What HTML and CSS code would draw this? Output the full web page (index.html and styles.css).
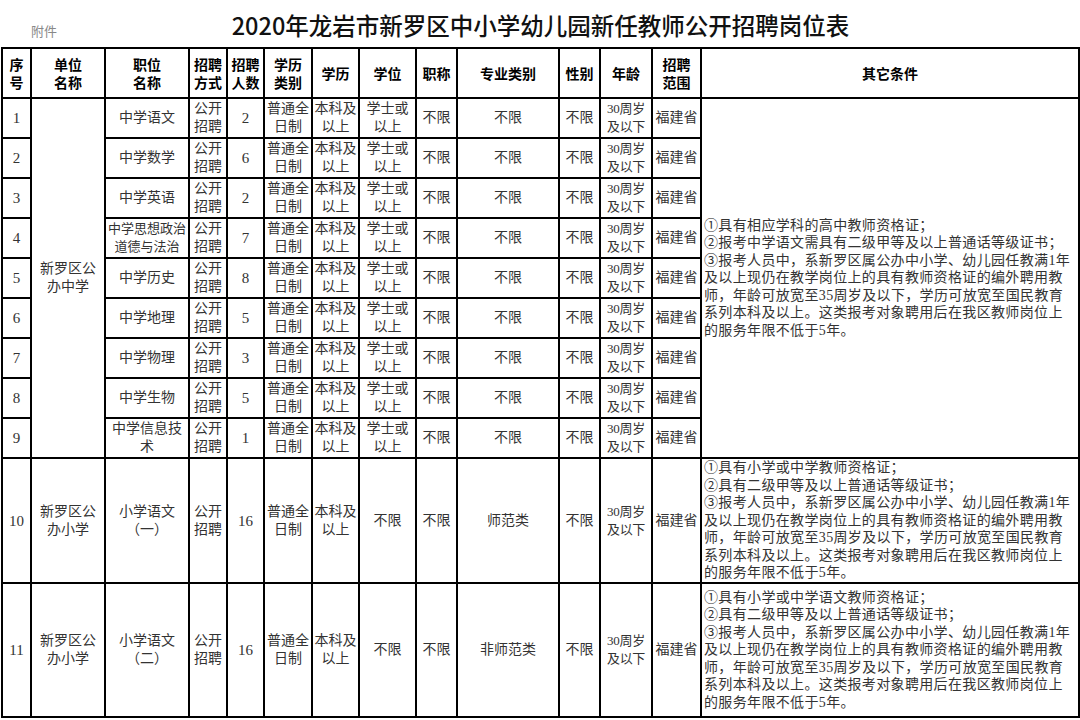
FILE: index.html
```html
<!DOCTYPE html>
<html lang="zh-CN">
<head>
<meta charset="utf-8">
<title>2020年龙岩市新罗区中小学幼儿园新任教师公开招聘岗位表</title>
<link rel="stylesheet" href="styles.css">
</head>
<body>
<div class="page">
  <header class="doc-head">
    <span class="attach">附件</span>
    <h1 class="doc-title">2020年龙岩市新罗区中小学幼儿园新任教师公开招聘岗位表</h1>
    <span></span>
  </header>
  <table class="jobs">
    <colgroup>
      <col class="c-no"><col class="c-unit"><col class="c-pos"><col class="c-way"><col class="c-num">
      <col class="c-type"><col class="c-edu"><col class="c-deg"><col class="c-title"><col class="c-major">
      <col class="c-sex"><col class="c-age"><col class="c-area"><col class="c-other">
    </colgroup>
    <thead>
      <tr>
        <th>序<br>号</th><th>单位<br>名称</th><th>职位<br>名称</th><th>招聘<br>方式</th><th>招聘<br>人数</th>
        <th>学历<br>类别</th><th>学历</th><th>学位</th><th>职称</th><th>专业类别</th>
        <th>性别</th><th>年龄</th><th>招聘<br>范围</th><th>其它条件</th>
      </tr>
    </thead>
    <tbody>
      <tr>
        <td class="num">1</td>
        <td rowspan="9">新罗区公<br>办中学</td>
        <td>中学语文</td><td>公开<br>招聘</td><td class="num">2</td><td>普通全<br>日制</td><td>本科及<br>以上</td><td>学士或<br>以上</td><td>不限</td><td>不限</td><td>不限</td><td class="age">30周岁<br>及以下</td><td>福建省</td>
        <td rowspan="9" class="other">①具有相应学科的高中教师资格证；<br>②报考中学语文需具有二级甲等及以上普通话等级证书；<br>③报考人员中，系新罗区属公办中小学、幼儿园任教满1年<br>及以上现仍在教学岗位上的具有教师资格证的编外聘用教<br>师，年龄可放宽至35周岁及以下，学历可放宽至国民教育<br>系列本科及以上。这类报考对象聘用后在我区教师岗位上<br>的服务年限不低于5年。</td>
      </tr>
      <tr><td class="num">2</td><td>中学数学</td><td>公开<br>招聘</td><td class="num">6</td><td>普通全<br>日制</td><td>本科及<br>以上</td><td>学士或<br>以上</td><td>不限</td><td>不限</td><td>不限</td><td class="age">30周岁<br>及以下</td><td>福建省</td></tr>
      <tr><td class="num">3</td><td>中学英语</td><td>公开<br>招聘</td><td class="num">2</td><td>普通全<br>日制</td><td>本科及<br>以上</td><td>学士或<br>以上</td><td>不限</td><td>不限</td><td>不限</td><td class="age">30周岁<br>及以下</td><td>福建省</td></tr>
      <tr><td class="num">4</td><td class="small">中学思想政治<br>道德与法治</td><td>公开<br>招聘</td><td class="num">7</td><td>普通全<br>日制</td><td>本科及<br>以上</td><td>学士或<br>以上</td><td>不限</td><td>不限</td><td>不限</td><td class="age">30周岁<br>及以下</td><td>福建省</td></tr>
      <tr><td class="num">5</td><td>中学历史</td><td>公开<br>招聘</td><td class="num">8</td><td>普通全<br>日制</td><td>本科及<br>以上</td><td>学士或<br>以上</td><td>不限</td><td>不限</td><td>不限</td><td class="age">30周岁<br>及以下</td><td>福建省</td></tr>
      <tr><td class="num">6</td><td>中学地理</td><td>公开<br>招聘</td><td class="num">5</td><td>普通全<br>日制</td><td>本科及<br>以上</td><td>学士或<br>以上</td><td>不限</td><td>不限</td><td>不限</td><td class="age">30周岁<br>及以下</td><td>福建省</td></tr>
      <tr><td class="num">7</td><td>中学物理</td><td>公开<br>招聘</td><td class="num">3</td><td>普通全<br>日制</td><td>本科及<br>以上</td><td>学士或<br>以上</td><td>不限</td><td>不限</td><td>不限</td><td class="age">30周岁<br>及以下</td><td>福建省</td></tr>
      <tr><td class="num">8</td><td>中学生物</td><td>公开<br>招聘</td><td class="num">5</td><td>普通全<br>日制</td><td>本科及<br>以上</td><td>学士或<br>以上</td><td>不限</td><td>不限</td><td>不限</td><td class="age">30周岁<br>及以下</td><td>福建省</td></tr>
      <tr><td class="num">9</td><td>中学信息技<br>术</td><td>公开<br>招聘</td><td class="num">1</td><td>普通全<br>日制</td><td>本科及<br>以上</td><td>学士或<br>以上</td><td>不限</td><td>不限</td><td>不限</td><td class="age">30周岁<br>及以下</td><td>福建省</td></tr>
      <tr class="tall10">
        <td class="num">10</td><td>新罗区公<br>办小学</td><td>小学语文<br>（一）</td><td>公开<br>招聘</td><td class="num">16</td><td>普通全<br>日制</td><td>本科及<br>以上</td><td>不限</td><td>不限</td><td>师范类</td><td>不限</td><td class="age">30周岁<br>及以下</td><td>福建省</td>
        <td class="other">①具有小学或中学教师资格证；<br>②具有二级甲等及以上普通话等级证书；<br>③报考人员中，系新罗区属公办中小学、幼儿园任教满1年<br>及以上现仍在教学岗位上的具有教师资格证的编外聘用教<br>师，年龄可放宽至35周岁及以下，学历可放宽至国民教育<br>系列本科及以上。这类报考对象聘用后在我区教师岗位上<br>的服务年限不低于5年。</td>
      </tr>
      <tr class="tall11">
        <td class="num">11</td><td>新罗区公<br>办小学</td><td>小学语文<br>（二）</td><td>公开<br>招聘</td><td class="num">16</td><td>普通全<br>日制</td><td>本科及<br>以上</td><td>不限</td><td>不限</td><td>非师范类</td><td>不限</td><td class="age">30周岁<br>及以下</td><td>福建省</td>
        <td class="other">①具有小学或中学语文教师资格证；<br>②具有二级甲等及以上普通话等级证书；<br>③报考人员中，系新罗区属公办中小学、幼儿园任教满1年<br>及以上现仍在教学岗位上的具有教师资格证的编外聘用教<br>师，年龄可放宽至35周岁及以下，学历可放宽至国民教育<br>系列本科及以上。这类报考对象聘用后在我区教师岗位上<br>的服务年限不低于5年。</td>
      </tr>
    </tbody>
  </table>
</div>
</body>
</html>
```

FILE: styles.css
```css
html, body {
  margin: 0;
  padding: 0;
  background: #fff;
}

.page {
  width: 1080px;
  padding: 0 0 0 1px;
  box-sizing: border-box;
}

.doc-head {
  height: 47px;
  display: grid;
  grid-template-columns: 1fr auto 1fr;
  align-items: center;
}

.attach {
  padding: 14px 0 0 30px;
  font: 13px "Noto Sans CJK SC", sans-serif;
  color: #888;
}

.doc-title {
  margin: 0;
  font: 500 23.5px/28px "Noto Sans CJK SC", sans-serif;
  color: #111;
  padding-top: 2px;
}

.jobs {
  width: 1077px;
  table-layout: fixed;
  border-collapse: collapse;
  font: 14px/18px "Liberation Serif", "Noto Sans CJK SC", serif;
  color: #333;
}

.c-no { width: 29px; }
.c-unit { width: 74px; }
.c-pos { width: 84px; }
.c-way { width: 38px; }
.c-num { width: 37px; }
.c-type { width: 48px; }
.c-edu { width: 47px; }
.c-deg { width: 57px; }
.c-title { width: 41px; }
.c-major { width: 102px; }
.c-sex { width: 41px; }
.c-age { width: 52px; }
.c-area { width: 49px; }
.c-other { width: 378px; }

.jobs th,
.jobs td {
  border: 2px solid #000;
  padding: 0;
  text-align: center;
  vertical-align: middle;
  white-space: nowrap;
  overflow: visible;
}

.jobs th {
  height: 48px;
  font: 700 14px/18px "Noto Sans CJK SC", sans-serif;
  color: #000;
}

.jobs td {
  height: 38px;
}

.jobs .num {
  font-size: 15px;
}

.jobs .small {
  font-size: 13px;
}

.jobs .age {
  font-size: 13px;
  letter-spacing: -0.3px;
}

.jobs .other {
  text-align: left;
  padding: 0 2px 0 2px;
  font-size: 14px;
  line-height: 17.5px;
  letter-spacing: 0.35px;
  color: #333;
}

.tall10 td {
  height: 123px;
}

.tall11 td {
  height: 132px;
}
```
